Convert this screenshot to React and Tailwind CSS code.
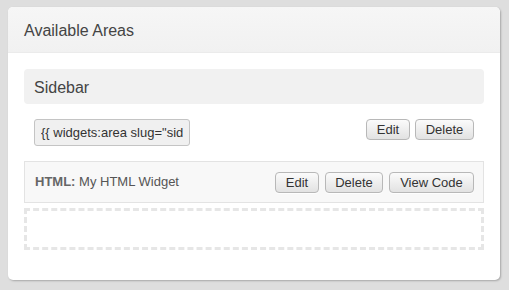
import React from 'react';

const Button = ({ children, className = '' }) => (
  <button
    type="button"
    className={`h-[21px] rounded-[4px] border border-[#b8b8b8] bg-gradient-to-b from-[#fbfbfb] to-[#e2e2e2] px-[9px] text-[13px] leading-none text-[#333] shadow-[0_1px_0_rgba(255,255,255,0.8)] ${className}`}
  >
    {children}
  </button>
);

const App = () => {
  return (
    <div className="h-[290px] w-[509px] bg-[#dedede] pl-[8px] pt-[7px] font-['Liberation_Sans',Arial,sans-serif]">
      <div className="h-[273px] w-[492px] overflow-hidden rounded-[5px] bg-white shadow-[1px_1px_2px_rgba(0,0,0,0.25)]">
        {/* header */}
        <div className="flex h-[46px] items-center border-b border-[#ebebeb] bg-gradient-to-b from-[#f6f6f6] to-[#f1f1f1] px-4 pt-[3px]">
          <h2 className="text-[16px] text-[#444]">Available Areas</h2>
        </div>

        <div className="px-4 pt-4">
          {/* area title */}
          <div className="flex h-[35px] items-center rounded-[4px] bg-[#f1f1f1] px-[10px] pt-[2px]">
            <h3 className="text-[16px] text-[#444]">Sidebar</h3>
          </div>

          <div className="mt-[15px] flex items-start justify-between pl-[10px] pr-[10px]">
            <input
              readOnly
              value={'{{ widgets:area slug="sidebar" }}'}
              className="h-[27px] w-[156px] rounded-[3px] border border-[#c4c4c4] bg-[#f0f0f0] px-[6px] text-[13px] text-[#333] outline-none"
            />
            <div className="flex gap-[5px]">
              <Button className="w-[44px]">Edit</Button>
              <Button className="w-[59px]">Delete</Button>
            </div>
          </div>

          {/* widget row */}
          <div className="mt-[15px] flex h-[42px] items-center justify-between border border-[#e3e3e3] bg-[#f8f8f8] pl-[10px] pr-[9px]">
            <p className="text-[13px] text-[#555]">
              <span className="font-bold text-[#666]">HTML:</span> My HTML Widget
            </p>
            <div className="flex gap-[6px]">
              <Button className="w-[44px]">Edit</Button>
              <Button className="w-[58px]">Delete</Button>
              <Button className="w-[85px]">View Code</Button>
            </div>
          </div>

          {/* drop zone */}
          <div className="mt-[5px] h-[42px] border-[3px] border-dashed border-[#e6e6e6]" />
        </div>
      </div>
    </div>
  );
};

export default App;
